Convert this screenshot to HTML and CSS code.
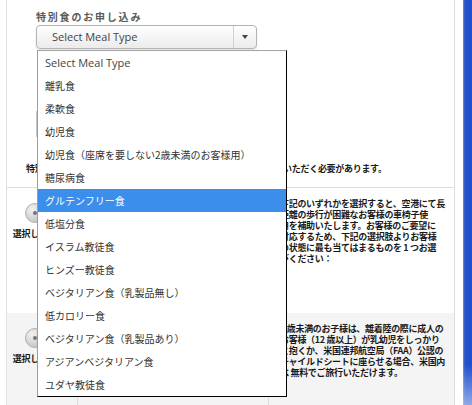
FILE: index.html
```html
<!doctype html>
<html lang="ja">
<head>
	<meta charset="UTF-8">
	<title>特別食のお申し込み</title>
	<link rel="stylesheet" href="styles.css">
</head>
<body>
	<div class="sheet">
		<div class="meal-field">
			<p class="field-label">特別食のお申し込み</p>
			<div class="select-box">
				<span class="select-value">Select Meal Type</span>
				<span class="select-arrow"></span>
			</div>

			<!-- open option list of the meal select -->
			<ul class="select-menu">
				<li class="option-latin">Select Meal Type</li>
				<li>離乳食</li>
				<li>柔軟食</li>
				<li>幼児食</li>
				<li>幼児食（座席を要しない2歳未満のお客様用）</li>
				<li>糖尿病食</li>
				<li class="is-active">グルテンフリー食</li>
				<li>低塩分食</li>
				<li>イスラム教徒食</li>
				<li>ヒンズー教徒食</li>
				<li>ベジタリアン食（乳製品無し）</li>
				<li>低カロリー食</li>
				<li>ベジタリアン食（乳製品あり）</li>
				<li>アジアンベジタリアン食</li>
				<li>ユダヤ教徒食</li>
			</ul>

			<div class="remarks-box"></div>
		</div>

		<p class="notice">特別食をご希望のお客様は、ご出発の 24 時間前までにお申し込みいただく必要があります。</p>

		<div class="assist-row">
			<div class="assist-choice">
				<span class="radio-dot"></span>
				<span class="choice-label">選択しない</span>
			</div>
			<div class="assist-middle"></div>
			<p class="assist-text">下記のいずれかを選択すると、空港にて長<br>距離の歩行が困難なお客様の車椅子使<br>用を補助いたします。お客様のご要望に<br>対応するため、下記の選択肢よりお客様<br>の状態に最も当てはまるものを 1 つお選<br>びください：</p>
		</div>

		<div class="assist-row assist-row--shaded">
			<div class="assist-choice">
				<span class="radio-dot"></span>
				<span class="choice-label">選択しない</span>
			</div>
			<div class="assist-middle"></div>
			<p class="assist-text">2 歳未満のお子様は、離着陸の際に成人の<br>お客様（12 歳以上）が乳幼児をしっかり<br>と抱くか、米国連邦航空局（FAA）公認の<br>チャイルドシートに座らせる場合、米国内<br>は 無料でご旅行いただけます。</p>
		</div>
	</div>
	<div class="window-edge"></div>
</body>
</html>
```

FILE: styles.css
```css
html, body {
	height: 100%;
}
body {
	margin: 0;
	display: flex;
	overflow: hidden;
	background: #fff;
	font-family: "Noto Sans CJK JP", sans-serif;
	color: #1a1a1a;
}

.sheet {
	display: flex;
	flex-direction: column;
	width: 449px;
	margin-left: 6px;
	border-left: 1px solid #e1e1e1;
	border-right: 1px solid #dcdcdc;
	box-sizing: border-box;
}

/* the blue frame of the browser window on the right */
.window-edge {
	width: 9px;
	margin-left: auto;
	background:
		linear-gradient(rgba(255,255,255,0) 90%, rgba(190,205,240,.7)),
		linear-gradient(90deg, #8ea2cf, #3b63c6 1px, #2153cf 3px, #1b4ed3);
}

.meal-field {
	position: relative;
	padding: 10px 0 0 29px;
}
.field-label {
	margin: 0;
	font-size: 10px;
	line-height: 14px;
	font-weight: bold;
	letter-spacing: 1.8px;
	color: #5a5a5a;
}

.select-box {
	display: flex;
	width: 221px;
	height: 24px;
	margin-top: 1px;
	box-sizing: border-box;
	border: 1px solid #b4b4b4;
	border-radius: 4px;
	background: linear-gradient(#fff, #ebebeb);
	box-shadow: 0 1px 2px rgba(0,0,0,.12);
}
.select-value {
	flex: 1;
	padding-left: 15px;
	font: 11px/22px "Open Sans", sans-serif;
	color: #444;
}
.select-arrow {
	display: flex;
	align-items: center;
	justify-content: center;
	width: 22px;
	border-left: 1px solid #d0d0d0;
}
.select-arrow::after {
	content: '';
	border-left: 3px solid transparent;
	border-right: 3px solid transparent;
	border-top: 4px solid #3a4350;
}

/* option list drops over everything below it */
.select-menu {
	position: absolute;
	z-index: 2;
	top: 50px;
	left: 30px;
	width: 250px;
	margin: 0;
	padding: 0;
	list-style: none;
	background: #fff;
	border: 1px solid #000;
	border-top-color: #a3a3a3;
	border-left-color: #9c9c9c;
	box-sizing: border-box;
}
.select-menu li {
	height: 23px;
	padding-left: 7px;
	font-size: 10px;
	line-height: 23px;
	color: #333;
	white-space: nowrap;
}
.select-menu .option-latin {
	font: 11px/23px "Open Sans", sans-serif;
	color: #444;
}
.select-menu .is-active {
	background: #3b8eea;
	color: #fff;
}

.remarks-box {
	width: 210px;
	height: 26px;
	margin-top: 62px;
	border: 1px solid #c4c4c4;
	box-sizing: border-box;
}

.notice {
	margin: 26px 0 0 19px;
	font-size: 9px;
	line-height: 12px;
	font-weight: bold;
	letter-spacing: -.3px;
	white-space: nowrap;
}

.assist-row {
	display: grid;
	grid-template-columns: 71px 191px 1fr;
	height: 126px;
	margin-top: 12px;
	border-top: 1px solid #dedede;
	box-sizing: border-box;
}
.assist-row--shaded {
	flex: 1;
	margin-top: 0;
	border-top: none;
	background: #f4f4f4;
}

.assist-choice {
	padding: 15px 15px 0 0;
	border-right: 1px solid #dcdcdc;
	text-align: center;
}
.assist-middle {
	border-right: 1px solid #dcdcdc;
}
.radio-dot {
	display: block;
	position: relative;
	width: 20px;
	height: 20px;
	margin: 0 auto;
	border: 1px solid #b0b0b0;
	border-radius: 50%;
	box-sizing: border-box;
	background: radial-gradient(circle at 35% 30%, #f2f2f2, #c9c9c9 70%, #b5b5b5);
}
.radio-dot::after {
	content: '';
	position: absolute;
	top: 7px;
	left: 7px;
	width: 4px;
	height: 4px;
	border-radius: 50%;
	background: #777;
}
.choice-label {
	display: block;
	margin-top: 5px;
	font-size: 9px;
	line-height: 12px;
	font-weight: bold;
	letter-spacing: -.3px;
	white-space: nowrap;
}

.assist-text {
	margin: 0;
	padding: 10px 0 0 11px;
	font-size: 9px;
	line-height: 11px;
	font-weight: bold;
	letter-spacing: -.3px;
	white-space: nowrap;
}
```
